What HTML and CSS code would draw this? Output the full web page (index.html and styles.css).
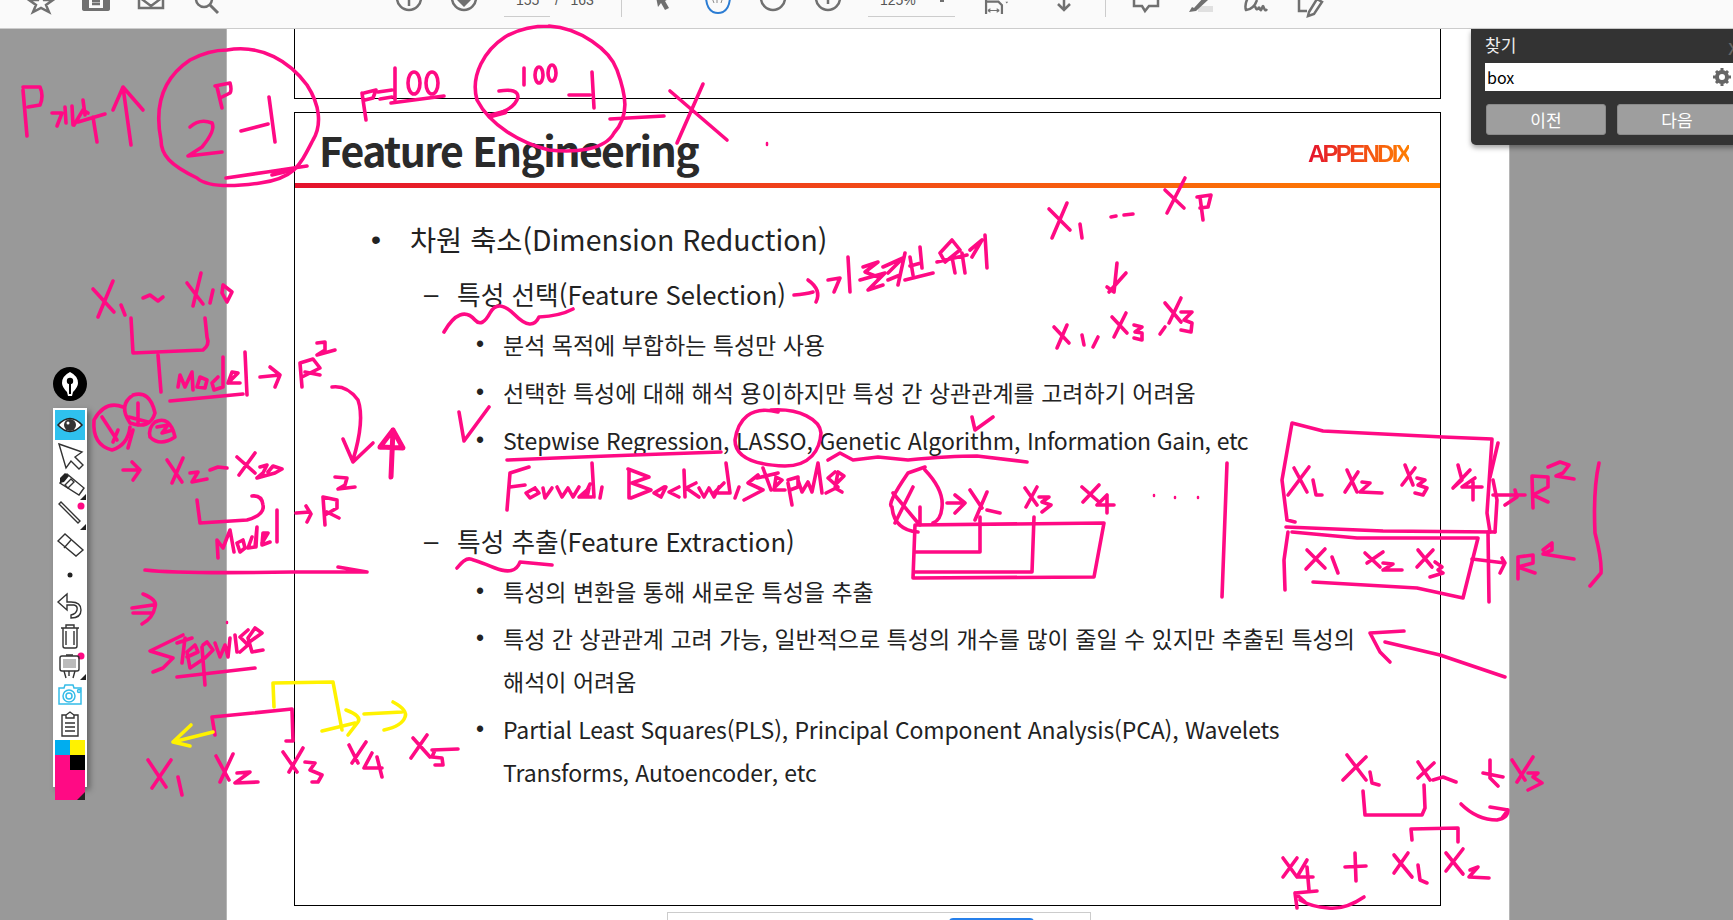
FILE: index.html
```html
<!DOCTYPE html>
<html lang="ko">
<head>
<meta charset="utf-8">
<title>Feature Engineering</title>
<link rel="stylesheet" href="styles.css">
</head>
<body>
<header class="toolbar">
  <div class="group g-file">
    <svg class="ti" viewBox="0 0 30 28"><path class="ol" d="M15-8l3 8h9l-7 5 3 7-8-4-8 4 3-7-7-5h9z"/></svg>
    <svg class="ti" viewBox="0 0 30 28"><path class="fl" d="M4-4h22q3 0 3 3v10q0 2-3 2H4q-3 0-3-2V-1q0-3 3-3z"/><rect x="8" y="-2" width="14" height="10" fill="#fafafa"/><path class="ol" d="M11 1h8M11 4h8"/></svg>
    <svg class="ti" viewBox="0 0 30 28"><path class="ol" d="M3-6h24V8H3zM3-3l12 9 12-9"/></svg>
    <svg class="ti" viewBox="0 0 30 28"><circle class="ol" cx="13" cy="-1" r="8"/><path class="ol th" d="M19 5l8 8"/></svg>
  </div>
  <div class="group g-nav">
    <svg class="ti" viewBox="0 0 30 28"><circle class="ol" cx="15" cy="-2" r="12"/><path class="ol" d="M15-6V6"/></svg>
    <svg class="ti" viewBox="0 0 30 28"><circle class="ol" cx="15" cy="-2" r="12"/><path class="fl" d="M11-2h8v2h3l-7 7-7-7h3z"/></svg>
  </div>
  <div class="pager"><span class="pager-text">155&nbsp;&nbsp;&nbsp;&nbsp;/&nbsp;&nbsp;&nbsp;163</span></div>
  <div class="sep s1"></div>
  <div class="group g-tools">
    <svg class="ti" viewBox="0 0 30 28"><path class="fl" d="M7-8l15 6-5 3 4 7-4 2-4-7-3 4z"/></svg>
    <svg class="ti" viewBox="0 0 30 28"><path class="blue" d="M3-4q0 12 7 16 5 2 10 0 7-4 7-16"/><path class="hand" d="M9-2l2 5M14 0v3M19 0l-1 3"/></svg>
    <svg class="ti" viewBox="0 0 30 28"><circle class="ol" cx="15" cy="-2" r="12"/><path class="ol" d="M9-2h12"/></svg>
    <svg class="ti" viewBox="0 0 30 28"><circle class="ol" cx="15" cy="-2" r="12"/><path class="ol" d="M9-2h12M15-8V4"/></svg>
  </div>
  <div class="zoombox"><span class="zoom-text">125%</span><span class="caret"></span></div>
  <div class="group g-view">
    <svg class="ti" viewBox="0 0 34 28"><path class="ol" d="M8-4V14M8 0h14l4 4v10"/><path class="ol thin" d="M10 10h13M10 10l3-2M10 10l3 2M23 10l-3-2M23 10l-3 2"/><path class="fl" d="M30 0h3l-1.500 2z"/></svg>
    <svg class="ti" viewBox="0 0 30 28"><path class="ol" d="M15-6V9M9 4l6 6 6-6"/></svg>
  </div>
  <div class="sep s2"></div>
  <div class="group g-note">
    <svg class="ti" viewBox="0 0 30 28"><path class="ol" d="M3-6V6h8l3 5 4-5h9V-6"/></svg>
    <svg class="ti" viewBox="0 0 30 28"><rect x="12" y="6" width="15" height="6" fill="#e0e0e0"/><path class="fl" d="M3 12l3-5 2 1 10-11 4 3-12 11z"/></svg>
    <svg class="ti" viewBox="0 0 30 28"><path class="ol" d="M8-4Q3 4 5 10q8-1 11-10M14 6q1 4 3 3 1-3 2 0t2-1 2 0 3 1"/></svg>
    <svg class="ti" viewBox="0 0 30 28"><path class="ol" d="M3-2V11h8"/><path class="ol" d="M13 12l8-13 5 3-8 12-6 2z"/></svg>
  </div>
</header>

<main class="viewer">
  <div class="page">
    <div class="slide-end"></div>
    <section class="slide">
      <div class="slide-head">
        <h1 class="title">Feature Engineering</h1>
        <span class="tag">APPENDIX</span>
      </div>
      <div class="slide-bar"></div>
      <div class="slide-body">
        <div class="row l1"><span class="mark">•</span><span>차원 축소(Dimension Reduction)</span></div>
        <div class="row l2"><span class="mark">–</span><span>특성 선택(Feature Selection)</span></div>
        <div class="row l3 first"><span class="mark">•</span><span>분석 목적에 부합하는 특성만 사용</span></div>
        <div class="row l3"><span class="mark">•</span><span>선택한 특성에 대해 해석 용이하지만 특성 간 상관관계를 고려하기 어려움</span></div>
        <div class="row l3 gapped"><span class="mark">•</span><span>Stepwise Regression, LASSO, Genetic Algorithm, <span class="tight">Information Gain, etc</span></span></div>
        <div class="row l2 next"><span class="mark">–</span><span>특성 추출(Feature Extraction)</span></div>
        <div class="row l3 first"><span class="mark">•</span><span>특성의 변환을 통해 새로운 특성을 추출</span></div>
        <div class="row l3"><span class="mark">•</span><span>특성 간 상관관계 고려 가능, 일반적으로 특성의 개수를 많이 줄일 수 있지만 추출된 특성의<br>해석이 어려움</span></div>
        <div class="row l3 gapped latin"><span class="mark">•</span><span>Partial Least Squares(PLS), Principal Component Analysis(PCA), Wavelets<br>Transforms, Autoencoder, etc</span></div>
      </div>
    </section>
    <div class="float-bar"><span class="float-hint"></span><span class="float-btn"></span></div>
  </div>
</main>

<aside class="palette-wrap">
  <div class="logo">
    <svg viewBox="0 0 34 34" width="34" height="34"><circle cx="17" cy="17" r="17" fill="#000"/><path d="M17 5q8 4 8 11 0 4-5 9l-1 4h-4l-1-4q-5-5-5-9 0-7 8-11z" fill="#fff"/><circle cx="17" cy="14" r="3.200" fill="#000"/><path d="M16 15h2v12h-2z" fill="#000"/></svg>
  </div>
  <div class="palette">
    <div class="tool on"><svg viewBox="0 0 30 30"><path d="M3 15q12-13 24 0-12 13-24 0z" fill="#fff" stroke="#222" stroke-width="1.500"/><circle cx="15" cy="15" r="6" fill="#333"/><circle cx="13" cy="13" r="1.500" fill="#fff"/></svg></div>
    <div class="tool"><svg viewBox="0 0 30 30"><path class="tl" d="M4 4l23 8-7 5 8 8-4 4-8-8-5 7z"/></svg></div>
    <div class="tool"><svg viewBox="0 0 30 30"><path class="tl" d="M5 13l7-9 17 14-5 7z"/><path class="tf" d="M5 8l5-5 4 3-5 6-4 1z"/><path class="tl" d="M10 15l6-6 3 3-6 6z"/><path class="tf" d="M31 24v6h-6z"/></svg></div>
    <div class="tool"><svg viewBox="0 0 30 30"><circle class="dot" cx="26" cy="6" r="3.500"/><path class="tl" d="M4 4l2-2 19 19-2 2z"/><path class="tf" d="M31 24v6h-6z"/></svg></div>
    <div class="tool"><svg viewBox="0 0 30 30"><path class="tl" d="M3 11l7-7 18 16-7 6z"/><path class="tl" d="M9 18l7-8"/></svg></div>
    <div class="tool"><svg viewBox="0 0 30 30"><circle cx="15" cy="15" r="2.500" fill="#222"/></svg></div>
    <div class="tool"><svg viewBox="0 0 30 30"><path class="tl" d="M12 4L3 12l9 8v-5h7q4 1 3 5t-6 5v3q10 0 10-8 0-8-10-8h-4z"/></svg></div>
    <div class="tool"><svg viewBox="0 0 30 30"><path class="tl" d="M6 8h18M11 8V5h8v3M8 8v18q0 2 2 2h10q2 0 2-2V8M11 11v14M19 11v14"/></svg></div>
    <div class="tool"><svg viewBox="0 0 30 30"><circle class="dot" cx="26" cy="6" r="3.500"/><rect class="tl" x="5" y="6" width="19" height="15" rx="2"/><rect x="8" y="9" width="13" height="9" fill="#bbb"/><path class="tl" d="M11 5h7M9 21l2 7M20 21l-2 7M14 21v5"/><path class="tf" d="M31 24v6h-6z"/></svg></div>
    <div class="tool"><svg viewBox="0 0 30 30"><path class="cam" d="M4 8h5l1-3h8l1 3h7v16H4z"/><circle class="cam" cx="14" cy="16" r="6"/><circle class="cam" cx="14" cy="16" r="3"/><circle class="cam" cx="24" cy="11" r="1.500"/></svg></div>
    <div class="tool"><svg viewBox="0 0 30 30"><path class="tl" d="M11 5H7v21h16V5h-4M11 8V5l4-3 4 3v3zM10 13h10M10 17h10M10 21h10"/></svg></div>
    <div class="swatches">
      <span class="sw cyan"></span><span class="sw yellow"></span>
      <span class="sw pink"></span><span class="sw black"></span>
      <span class="sw pink wide"><i class="sw-corner"></i></span>
    </div>
  </div>
</aside>

<aside class="find">
  <div class="find-head"><span>찾기</span><span class="find-x">x</span></div>
  <div class="find-input"><span>box</span><svg class="gear" viewBox="0 0 18 18"><circle cx="9" cy="9" r="5" fill="none" stroke="#666" stroke-width="4"/><path d="M9 0v3M9 15v3M0 9h3M15 9h3M3 3l2 2M13 13l2 2M15 3l-2 2M5 13l-2 2" stroke="#666" stroke-width="3"/></svg></div>
  <div class="find-btns"><button class="btn">이전</button><button class="btn">다음</button></div>
</aside>

<svg class="ink" viewBox="0 0 1733 920" aria-hidden="true">
  <g class="pen">
    <!-- top left -->
    <path d="M23 90L27 136M23 87L40 87Q44 96 40 105L28 107"/>
    <path d="M52 113L62 113L57 126M65 107L66 123M72 106L73 125M74 125L83 110L88 113M83 100L85 115M78 122L105 114M93 117L97 142"/>
    <path d="M123 87L131 145M113 110L123 87L143 110"/>
    <path d="M227 50C262 44 290 62 307 85C320 105 322 125 313 140C300 165 295 178 260 183C225 188 205 185 197 178C170 165 161 155 161 140C155 110 160 80 190 60C205 52 215 50 227 50"/>
    <path d="M222 108L217 87M215 86L230 83Q232 90 230 93L222 97"/>
    <path d="M190 127Q200 118 212 123Q216 130 202 147L188 156L222 152"/>
    <path d="M241 131L268 124M269 97L275 142"/>
    <path d="M226 178L267 172L307 166M272 175L293 170"/>
    <!-- p=100 -->
    <path d="M362 93L366 120M364 93L376 90L373 98L365 100"/>
    <path d="M378 92L392 90M380 99L392 97M395 68L395 100"/>
    <ellipse cx="414" cy="83" rx="6" ry="11"/><ellipse cx="432" cy="83" rx="6" ry="11"/>
    <path d="M391 103L444 96"/>
    <path d="M549 26C580 28 610 50 617 70C626 95 630 115 614 133C605 150 575 153 549 150C520 143 490 125 477 100C470 75 485 50 505 37C520 28 535 26 549 26"/>
    <path d="M499 91Q518 88 518 97Q515 110 490 116"/>
    <path class="w4" d="M490 116L505 112"/>
    <path d="M524 68L524 85"/><ellipse cx="539" cy="75" rx="4" ry="8"/><ellipse cx="552" cy="73" rx="4" ry="8"/>
    <path d="M569 95L590 95M592 72L594 108M610 119L664 116"/>
    <path d="M670 91L727 140M703 84L677 143"/>
    <path class="w2" d="M767 143L767 145"/>
    <!-- X1 .. Xp -->
    <path d="M1049 209L1070 230M1067 203L1052 238M1080 224L1082 238"/>
    <path d="M1111 217L1116 216M1124 215L1133 214"/>
    <path d="M1165 190L1184 208M1185 178L1167 213M1200 197L1203 220M1197 197L1211 195L1208 207L1200 208"/>
    <path d="M1117 263L1114 292M1126 273L1109 292M1107 287L1114 292"/>
    <path d="M1054 327L1069 343M1067 325L1057 348M1082 335L1084 345M1098 337L1093 347"/>
    <path d="M1112 317L1127 333M1126 313L1114 337M1134 325L1142 327L1135 332L1142 333L1142 340L1134 338M1165 327L1160 334"/>
    <path d="M1165 303L1181 322M1181 298L1169 323M1181 312L1192 312L1184 320L1192 323L1191 332L1181 330"/>
    <!-- 기울정보 유지 -->
    <path d="M794 295Q806 294 813 292M808 280Q822 290 816 302"/>
    <path d="M828 280L840 278L834 292M848 257L850 292"/>
    <path d="M863 267L878 262L865 272L878 277M860 280L885 273L868 290L883 285"/>
    <path d="M883 267L903 258L888 273M905 253L898 285M888 280L900 275"/>
    <path d="M910 257L913 275M920 247L922 268M910 266L921 263M905 280L933 273"/>
    <path d="M940 253L952 240L960 250L945 262L940 253M937 262L967 255M952 257L955 273M962 253L965 273"/>
    <path d="M970 250L982 240L972 257M985 235L987 268"/>
    <!-- body marks -->
    <path d="M444 332Q452 318 460 315T475 320T490 313T515 315T539 317Q560 316 573 309"/>
    <path d="M459 412L464 441L489 407M972 417L975 430L993 417"/>
    <path d="M507 460Q600 456 721 452"/>
    <path d="M778 412C750 405 738 420 735 440C735 458 755 465 785 466C810 466 820 450 821 433C820 420 800 408 771 410"/>
    <path d="M828 460L840 453L853 460L878 457L908 460Q950 456 977 456L1027 462"/>
    <!-- Forward, Backward, stepwise -->
    <path d="M507 510L510 473L529 467M510 487L525 485"/>
    <path d="M535 488L526 493L530 498L539 493L535 488M543 488L545 498L552 488M557 487L562 497L568 488L573 497L579 487M587 490L579 497L587 497L589 488M592 463L594 497M590 484L584 497L592 497M602 487L600 498"/>
    <path d="M629 470L629 498M628 469L649 477L632 483L651 490L631 498"/>
    <path d="M664 487L654 493L661 497L666 487M679 487L669 492L679 497M684 470L685 497M696 483L686 488L699 497M699 488L704 497L709 488L714 497L719 487M726 463L730 493M724 483L714 493L730 493M739 487L735 498"/>
    <path d="M758 475L748 483L763 490L744 500M763 468L771 490M757 478L778 473M775 487L782 480L776 477L774 490L785 490"/>
    <path d="M788 483L792 505M788 480L798 477L798 487L790 490M798 480L802 492L808 482L812 492L818 463L822 493M835 472L828 478L838 487L826 493M836 484L844 476L838 472L835 488L842 492"/>
    <!-- X1 box -->
    <path d="M925 467L908 473Q886 505 892 507Q894 530 918 532M925 470Q944 490 942 507Q941 520 933 523"/>
    <path d="M893 493L918 523M913 487L895 523M920 507L920 525"/>
    <path d="M947 503L965 503M955 495L965 503L955 513"/>
    <path d="M970 490L982 508M987 492L975 520M987 510L1000 513"/>
    <path d="M1025 488L1037 505M1037 487L1026 507M1039 497L1049 497L1042 502L1051 505L1042 512"/>
    <path d="M1082 487L1099 502M1099 485L1083 502M1107 495L1097 505L1114 505M1107 495L1107 513"/>
    <path class="w2" d="M1154 495L1154 496M1175 497L1175 498M1198 497L1198 498"/>
    <path d="M915 525L1104 523L1094 577L913 578L915 525"/>
    <path d="M980 517L980 552L915 552M1034 517L1032 572L915 572"/>
    <path d="M457 568Q465 558 470 559T495 568T520 562L552 565"/>
    <!-- left column -->
    <path d="M93 289L114 312M113 281L98 317M121 305L125 315"/>
    <path d="M143 298L150 295L158 301L163 297"/>
    <path d="M187 283L203 304M201 273L193 306M210 303L213 290M223 285L232 292L227 302L222 293L223 285"/>
    <path d="M131 318L133 353L203 350Q210 345 207 337L205 318M158 355L161 392"/>
    <path d="M178 387L180 375L185 387L192 372L193 390M207 380L200 377L197 387L205 388L207 380M218 377L212 383L214 390L223 387M223 357L223 387M228 383L238 373L232 372L228 383L240 383M245 352L247 395"/>
    <path d="M170 401L243 394"/>
    <path d="M260 377L280 375M270 367L280 375L275 387"/>
    <path d="M300 363L302 387M300 363L313 359L320 368L302 377M305 372L320 375M317 343L325 342L325 350L317 355L335 350"/>
    <path d="M332 387Q347 385 358 400Q365 420 353 460M343 439L353 462L373 443"/>
    <path class="w4" d="M391 477L393 430M380 447L403 448L393 430L380 447"/>
    <path d="M123 407Q105 400 94 420Q92 445 112 450Q128 445 130 427"/>
    <path d="M102 417L117 440M118 430L113 442"/>
    <path d="M133 395Q150 390 155 413Q150 430 130 423Q118 405 133 395"/>
    <path d="M138 403L138 425M129 417L148 422"/>
    <path d="M155 422Q170 415 175 437Q160 447 150 437Q148 428 155 422M157 427L168 425L162 433L173 430"/>
    <path d="M133 430L128 448"/>
    <path d="M123 470L140 470M132 462L140 470L133 480"/>
    <path d="M167 460L182 482M183 458L172 483M190 473L198 472L192 482L207 479"/>
    <path d="M210 470L218 467L227 468"/>
    <path d="M237 457L255 473M255 453L239 475M260 467L267 465L263 473L257 478L275 473L282 469L273 466L268 472"/>
    <path d="M197 500L200 523L247 520Q265 515 263 505Q262 495 252 496"/>
    <path d="M218 558L217 540L223 548L230 530L234 552M243 540L237 543L240 552L245 548L243 540M252 537L248 548L255 547L257 527L256 547M262 543L268 533L263 533L262 545L270 542M277 510L277 542"/>
    <path d="M296 513L310 512M306 506L311 514L307 522"/>
    <path d="M323 497L325 525M323 497L337 500L337 508L325 515M327 512L339 518"/>
    <path d="M335 477L347 478L345 485L338 489L355 487"/>
    <path d="M145 570Q180 574 293 572L367 572M338 567L367 572"/>
    <!-- stepwise -->
    <path d="M132 608L153 605M133 613L152 613M143 594Q158 600 155 607Q153 618 142 624"/>
    <path d="M183 635L150 651L173 658L163 668L153 672"/>
    <path d="M177 643L192 638M185 638L182 663M187 657L198 652L195 645L187 652L190 668L202 660"/>
    <path d="M202 647L205 685M203 645L207 642L213 650L205 658M215 643L220 657L225 645L228 657L230 638"/>
    <path d="M235 635L237 652M248 630L240 637L248 645L240 652M248 643L262 633L255 628L248 638L252 652L263 650"/>
    <path class="w2" d="M227 622L227 623"/>
    <path d="M177 677L255 668"/>
    <path d="M215 735L212 717L253 713L292 709L293 741L286 741"/>
    <path d="M148 760L166 787M171 760L152 788M178 777L182 795"/>
    <path d="M216 756L229 780M233 754L220 782M237 773L250 772L235 783L258 782"/>
    <path d="M283 752L297 772M303 748L289 772M305 762L315 763L310 770L322 775L318 782L312 782"/>
    <path d="M349 745L358 763M366 742L352 763M372 753L364 768L382 768M377 757L382 777"/>
    <path d="M413 738L430 757M427 735L411 758M432 750L458 749M435 750L432 757L442 758L443 765L435 765"/>
    <!-- right column -->
    <path d="M1287 520L1282 480L1292 423L1323 431L1443 437L1492 439Q1490 470 1487 513L1490 532M1287 520L1295 522"/>
    <path d="M1498 443L1490 477M1493 480L1497 500L1495 532"/>
    <path d="M1286 527L1383 531L1495 532"/>
    <path d="M1288 532L1284 560L1285 590M1292 532L1357 538L1478 538L1463 598L1417 588L1313 582"/>
    <path d="M1488 532L1489 602M1227 463L1222 597"/>
    <path d="M1294 468L1307 492M1309 467L1288 495M1313 480L1316 495L1322 495"/>
    <path d="M1347 470L1357 492M1358 472L1345 492M1362 482L1370 483L1360 492L1382 493"/>
    <path d="M1405 465L1413 485M1415 468L1402 485M1417 478L1425 480L1418 485L1427 488L1423 495L1415 493"/>
    <path d="M1458 465L1462 480L1453 488M1470 470L1453 488M1475 478L1462 487L1482 487M1473 482L1473 500"/>
    <path d="M1493 495L1525 495M1515 490L1517 497L1505 505"/>
    <path d="M1532 477L1533 508M1532 476L1548 477L1548 487L1533 495L1548 502"/>
    <path d="M1548 467L1560 462L1569 465L1563 473L1556 476L1574 479"/>
    <path d="M1599 463Q1593 490 1595 533Q1602 560 1601 573L1590 586"/>
    <path d="M1307 550L1325 568M1325 549L1306 569M1332 557L1338 573"/>
    <path d="M1365 553L1380 567M1383 552L1367 563M1383 563L1393 564L1383 570L1402 570"/>
    <path d="M1418 550L1432 567M1433 550L1417 567M1435 562L1442 567L1438 570L1443 573L1430 577"/>
    <path d="M1472 559L1505 563M1502 558L1505 563L1500 573"/>
    <path d="M1518 557L1518 579M1518 557L1533 555L1533 563L1518 567L1535 573"/>
    <path d="M1543 550L1552 543L1552 550L1543 554L1574 559"/>
    <path d="M1505 677L1440 655L1385 642M1404 631L1370 633L1380 652L1390 662"/>
    <!-- bottom right -->
    <path d="M1347 755L1366 780M1366 757L1343 780M1370 772L1372 783L1379 785"/>
    <path d="M1418 762L1430 780M1434 763L1418 778M1433 780L1443 777L1456 782"/>
    <path d="M1490 760L1490 778L1498 786M1483 773L1503 777"/>
    <path d="M1512 760L1525 780M1533 757L1517 782M1528 773L1538 773L1533 777L1542 783L1528 790"/>
    <path d="M1363 791L1365 815L1422 815L1425 808L1424 785"/>
    <path d="M1461 804Q1477 820 1497 820Q1508 818 1508 810L1490 807M1502 818L1508 810"/>
    <path d="M1412 840L1411 829L1458 828L1458 842"/>
    <path d="M1283 858L1297 877M1297 858L1283 877M1307 860L1297 877L1313 877M1307 867L1309 890"/>
    <path d="M1355 853L1356 881M1345 867L1366 866"/>
    <path d="M1394 855L1412 877M1408 853L1394 873M1418 865L1420 880L1427 883"/>
    <path d="M1446 853L1463 874M1463 849L1446 871M1470 870L1478 867L1469 877L1489 878"/>
    <path d="M1364 897Q1345 910 1328 908Q1312 907 1300 900M1317 891L1295 893L1297 908M1295 893L1305 902"/>
  </g>
  <g class="pen yellow-ink">
    <path d="M274 707L273 683L333 682L342 730"/>
    <path d="M322 731L355 723M346 710Q362 716 358 722L348 735"/>
    <path d="M364 714L402 712M393 702Q408 710 405 717Q402 726 384 730"/>
    <path d="M213 732L173 742M191 725L173 742L190 746"/>
  </g>
</svg>
</body>
</html>
```
FILE: styles.css
```css
* { box-sizing: border-box; }
html, body { margin: 0; height: 100%; }
body {
  width: 1733px;
  height: 920px;
  overflow: hidden;
  position: relative;
  background: #999;
  font-family: "Noto Sans CJK KR", "Noto Sans", sans-serif;
  color: #222;
}

/* top toolbar */
.toolbar {
  display: flex;
  align-items: flex-start;
  height: 29px;
  background: #fafafa;
  border-bottom: 1px solid #ccc;
  overflow: hidden;
}
.group { display: flex; }
.ti { width: 30px; height: 28px; flex: none; overflow: visible; }
.ol { fill: none; stroke: #707070; stroke-width: 2.500; }
.ol.th { stroke-width: 3; }
.ol.thin { stroke-width: 1.200; }
.fl { fill: #707070; }
.blue { fill: none; stroke: #2b7cd3; stroke-width: 2; }
.hand { fill: none; stroke: #8a8a8a; stroke-width: 1; }
.g-file { margin-left: 26px; gap: 25px; }
.g-nav { margin-left: 173px; gap: 25px; }
.pager {
  margin-left: 25px;
  width: 46px;
  height: 17px;
  border-bottom: 1px solid #ccc;
  white-space: nowrap;
}
.pager-text, .zoom-text {
  display: block;
  margin-top: -8px;
  font-family: "Liberation Sans", sans-serif;
  font-size: 14px;
  line-height: 16px;
  color: #555;
  padding-left: 12px;
}
.sep { width: 1px; height: 17px; background: #ccc; flex: none; }
.s1 { margin-left: 71px; }
.s2 { margin-left: 26px; }
.g-tools { margin-left: 26px; gap: 25px; }
.zoombox {
  position: relative;
  margin-left: 25px;
  width: 87px;
  height: 17px;
  border-bottom: 1px solid #ccc;
}
.caret {
  position: absolute;
  left: 72px;
  top: 0;
  width: 4px;
  height: 2px;
  background: #707070;
}
.g-view { margin-left: 24px; gap: 40px; }
.g-note { margin-left: 25px; gap: 25px; }

/* document viewer */
.viewer { height: 891px; overflow: hidden; }
.page {
  margin-left: 227px;
  width: 1282px;
  height: 891px;
  background: #fff;
  box-shadow: -1px 0 0 #b5b5b5, 1px 0 0 #b5b5b5;
  overflow: hidden;
}
.slide-end {
  margin-left: 67px;
  width: 1147px;
  height: 70px;
  border: 1px solid #000;
  border-top: 0;
}
.slide {
  margin: 13px 0 0 67px;
  width: 1147px;
  height: 794px;
  border: 1px solid #000;
}
.slide-head {
  display: flex;
  justify-content: space-between;
  align-items: flex-end;
  height: 70px;
  padding: 0 31px 2px 24px;
}
.title {
  margin: 0;
  font-size: 41px;
  line-height: 64px;
  font-weight: 700;
  letter-spacing: -1.600px;
  color: #2a2a2a;
}
.tag {
  font-family: "Liberation Sans", sans-serif;
  font-size: 24px;
  line-height: 30px;
  font-weight: 700;
  letter-spacing: -2.700px;
  margin-bottom: 12px;
  background: linear-gradient(90deg, #e4122d, #ff8000);
  -webkit-background-clip: text;
  background-clip: text;
  color: transparent;
}
.slide-bar {
  height: 5px;
  background: linear-gradient(90deg, #e4122d, #ff8000);
}
.slide-body { padding-top: 31px; color: #222; }
.row { display: flex; white-space: nowrap; }
.mark { flex: none; font-family: "Liberation Sans", sans-serif; }
.l1 { font-size: 28.400px; line-height: 40px; padding-left: 76px; }
.l1 .mark { width: 39px; }
.l2 { font-size: 25.700px; line-height: 40px; padding-left: 129px; margin-top: 15px; }
.l2 .mark { width: 33px; }
.l2.next { margin-top: 59px; }
.l3 { font-size: 23px; line-height: 42.500px; padding-left: 181px; margin-top: 5px; }
.l3.first { margin-top: 9px; }
.l3.gapped { margin-top: 6px; }
.l3 .mark { width: 27px; }
.l3.latin { letter-spacing: -0.120px; }
.tight { letter-spacing: -0.350px; }
.float-bar {
  display: flex;
  margin: 6px 0 0 440px;
  width: 424px;
  height: 40px;
  padding: 5px 0 0 186px;
  border: 1px solid #ccc;
  background: #fff;
}
.float-hint { width: 34px; height: 2px; margin: 2px 61px 0 0; background: #e4e4e4; }
.float-btn { width: 85px; height: 30px; background: #2680eb; border-radius: 4px; }

/* ink palette */
.palette-wrap {
  position: absolute;
  left: 53px;
  top: 367px;
  width: 34px;
}
.logo { height: 41px; }
.logo svg { display: block; }
.palette {
  padding: 2px;
  background: #fff;
  box-shadow: 3px 3px 6px rgba(0,0,0,.35);
}
.tool { width: 30px; height: 30px; }
.tool svg { display: block; width: 30px; height: 30px; overflow: visible; }
.tool.on { background: #2fc1ee; }
.tl { fill: none; stroke: #333; stroke-width: 1.400; }
.tf { fill: #222; }
.dot { fill: #ff0a84; }
.cam { fill: none; stroke: #35bce8; stroke-width: 1.500; }
.swatches { display: grid; grid-template-columns: 15px 15px; grid-auto-rows: 15px; }
.sw { display: block; position: relative; }
.cyan { background: #00adef; }
.yellow { background: #fff200; }
.pink { background: #ff0a84; }
.black { background: #000; }
.wide { grid-column: span 2; height: 30px; }
.sw-corner {
  position: absolute;
  right: 0;
  bottom: 0;
  border-style: solid;
  border-width: 0 0 8px 8px;
  border-color: transparent transparent #222 transparent;
}

/* find panel */
.find {
  position: absolute;
  left: 1471px;
  top: 29px;
  width: 280px;
  height: 116px;
  padding: 4px 18px 0 14px;
  background: #333;
  border-radius: 0 0 0 5px;
  box-shadow: 0 3px 5px rgba(0,0,0,.35);
  color: #eee;
}
.find-head {
  display: flex;
  justify-content: space-between;
  height: 30px;
  font-size: 17px;
  line-height: 24px;
}
.find-x { color: #666; font-size: 22px; margin-right: -6px; }
.find-input {
  display: flex;
  align-items: center;
  justify-content: space-between;
  height: 28px;
  padding: 0 2px;
  background: #fff;
  color: #000;
  font-size: 16px;
  line-height: 24px;
}
.gear { width: 18px; height: 18px; }
.find-btns { display: flex; gap: 11px; margin-top: 13px; padding-left: 1px; }
.btn {
  flex: none;
  width: 120px;
  height: 31px;
  padding: 0;
  border: 1px solid #8a8a8a;
  border-radius: 3px;
  background: #9e9e9e;
  color: #fff;
  font: 17px/28px "Noto Sans CJK KR", sans-serif;
}

/* handwritten ink overlay */
.ink {
  position: absolute;
  left: 0;
  top: 0;
  width: 1733px;
  height: 920px;
  pointer-events: none;
}
.pen {
  fill: none;
  stroke: #ff0a84;
  stroke-width: 3.600;
  stroke-linecap: round;
  stroke-linejoin: round;
}
.yellow-ink { stroke: #fff200; }
.w4 { stroke-width: 5; }
.w2 { stroke-width: 2.500; }
```
